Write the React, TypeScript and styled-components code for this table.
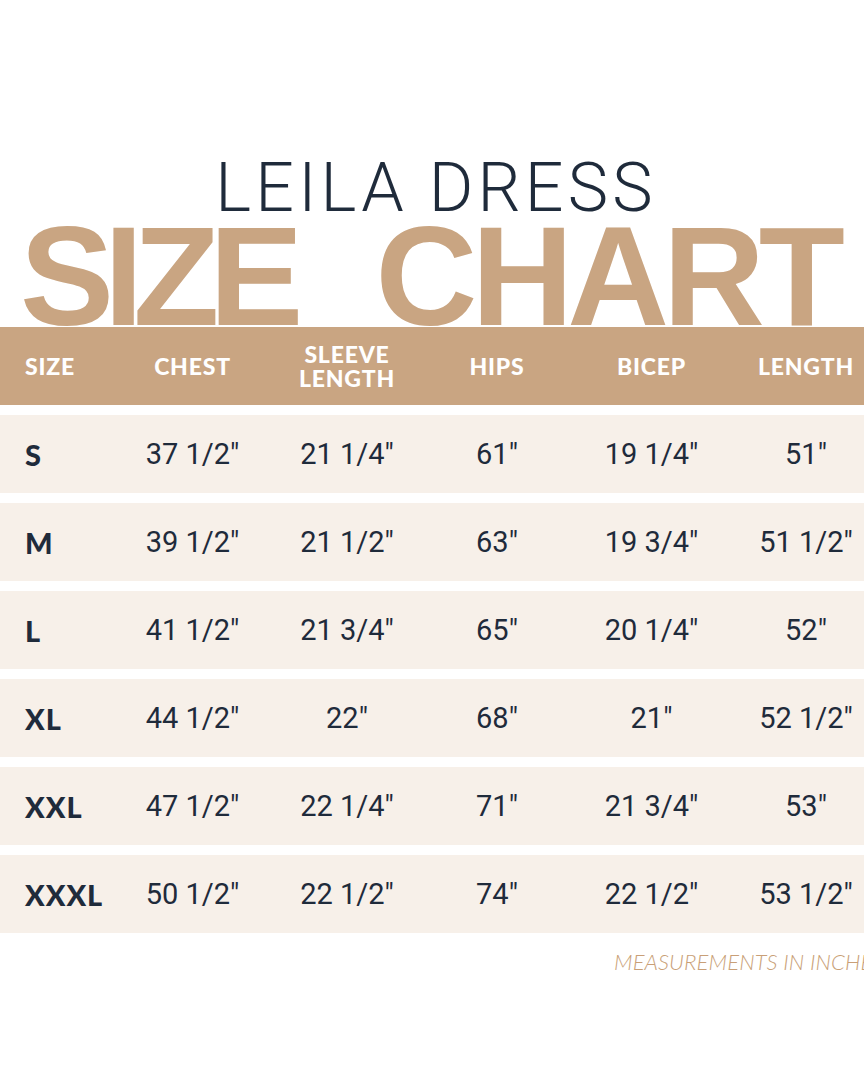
import React from "react";
import styled, { createGlobalStyle } from "styled-components";

const GlobalStyle = createGlobalStyle`
  html, body { margin: 0; padding: 0; background: #ffffff; }
  body { font-family: "Roboto", "Liberation Sans", sans-serif; }
`;

const TAN = "#C9A582";
const CREAM = "#F7F0E9";
const NAVY = "#1F2B3B";

const Page = styled.div`
  width: 864px;
  height: 1080px;
  background: #ffffff;
  overflow: hidden;
  display: flex;
  flex-direction: column;
`;

const Subtitle = styled.h2`
  margin: 0;
  padding-top: 152px;
  padding-left: 8px;
  text-align: center;
  font-family: "Roboto", sans-serif;
  font-weight: 300;
  font-size: 68px;
  line-height: 72px;
  letter-spacing: 4.2px;
  color: ${NAVY};
`;

const BigTitle = styled.h1`
  margin: 0;
  margin-top: 2px;
  padding: 0 25px 0 20px;
  display: flex;
  justify-content: space-between;
  font-family: "Liberation Sans", sans-serif;
  font-weight: 700;
  font-size: 141px;
  line-height: 101px;
  height: 101px;
  color: ${TAN};
`;

const BigWord = styled.span<{ $tracking: number }>`
  display: block;
  letter-spacing: ${(p) => p.$tracking}px;
`;

const columns = "115px 155px 154px 146px 163px 146px";

const HeaderBar = styled.div`
  height: 78px;
  background: ${TAN};
  display: grid;
  grid-template-columns: ${columns};
  align-items: center;
`;

const HeadCell = styled.div<{ $left?: boolean }>`
  font-family: "Lato", sans-serif;
  font-weight: 900;
  font-size: 23px;
  line-height: 24px;
  letter-spacing: 0.8px;
  color: #ffffff;
  text-align: ${(p) => (p.$left ? "left" : "center")};
  padding-left: ${(p) => (p.$left ? "25px" : "0")};
  white-space: nowrap;
`;

const HeadLine = styled.div`
  display: block;
`;

const Rows = styled.div`
  display: flex;
  flex-direction: column;
  gap: 10px;
  padding-top: 10px;
`;

const Row = styled.div`
  height: 78px;
  background: ${CREAM};
  display: grid;
  grid-template-columns: ${columns};
  align-items: center;
`;

const SizeCell = styled.div`
  padding-left: 25px;
  font-family: "Lato", sans-serif;
  font-weight: 900;
  font-size: 29px;
  letter-spacing: 1px;
  color: ${NAVY};
  white-space: nowrap;
`;

const ValueCell = styled.div`
  text-align: center;
  font-family: "Roboto", sans-serif;
  font-weight: 400;
  font-size: 29px;
  color: ${NAVY};
  white-space: nowrap;
`;

const Note = styled.div`
  margin-top: 15px;
  padding-left: 614px;
  font-family: "Lato", sans-serif;
  font-weight: 300;
  font-style: italic;
  font-size: 22px;
  letter-spacing: 0.1px;
  color: #C99F77;
  white-space: nowrap;
`;

const headers = ["CHEST", "SLEEVE\nLENGTH", "HIPS", "BICEP", "LENGTH"];

const data: [string, string[]][] = [
  ["S", ['37 1/2"', '21 1/4"', '61"', '19 1/4"', '51"']],
  ["M", ['39 1/2"', '21 1/2"', '63"', '19 3/4"', '51 1/2"']],
  ["L", ['41 1/2"', '21 3/4"', '65"', '20 1/4"', '52"']],
  ["XL", ['44 1/2"', '22"', '68"', '21"', '52 1/2"']],
  ["XXL", ['47 1/2"', '22 1/4"', '71"', '21 3/4"', '53"']],
  ["XXXL", ['50 1/2"', '22 1/2"', '74"', '22 1/2"', '53 1/2"']],
];

export default function App() {
  return (
    <Page>
      <GlobalStyle />
      <Subtitle>LEILA DRESS</Subtitle>
      <BigTitle>
        <BigWord $tracking={-10}>SIZE</BigWord>
        <BigWord $tracking={-6}>CHART</BigWord>
      </BigTitle>
      <HeaderBar>
        <HeadCell $left>SIZE</HeadCell>
        {headers.map((h) => (
          <HeadCell key={h}>
            {h.split("\n").map((line) => (
              <HeadLine key={line}>{line}</HeadLine>
            ))}
          </HeadCell>
        ))}
      </HeaderBar>
      <Rows>
        {data.map(([size, vals]) => (
          <Row key={size}>
            <SizeCell>{size}</SizeCell>
            {vals.map((v, i) => (
              <ValueCell key={i}>{v}</ValueCell>
            ))}
          </Row>
        ))}
      </Rows>
      <Note>MEASUREMENTS IN INCHES</Note>
    </Page>
  );
}
